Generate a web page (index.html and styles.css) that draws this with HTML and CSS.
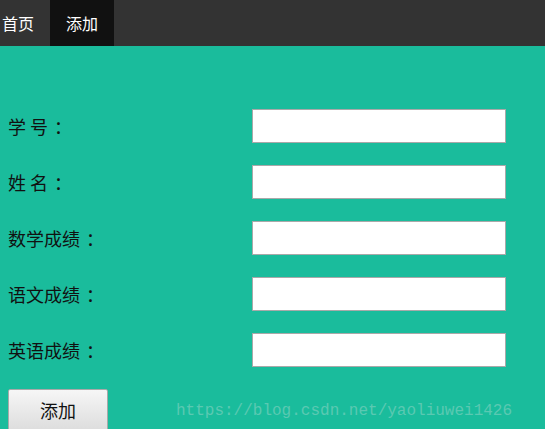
FILE: index.html
```html
<!DOCTYPE html>
<html lang="zh-CN">
<head>
  <meta charset="UTF-8" />
  <title>添加</title>
  <link rel="stylesheet" href="styles.css">
</head>
<body>

<ul class="nav">
  <li><a href="#" class="first">首页</a></li>
  <li><a href="#" class="active">添加</a></li>
</ul>

<form class="add-form">
  <div class="row">
    <label for="sno">学 号<span class="colon">：</span></label>
    <input type="text" id="sno" />
  </div>
  <div class="row">
    <label for="sname">姓 名<span class="colon">：</span></label>
    <input type="text" id="sname" />
  </div>
  <div class="row">
    <label for="math">数学成绩<span class="colon">：</span></label>
    <input type="text" id="math" />
  </div>
  <div class="row">
    <label for="chinese">语文成绩<span class="colon">：</span></label>
    <input type="text" id="chinese" />
  </div>
  <div class="row">
    <label for="english">英语成绩<span class="colon">：</span></label>
    <input type="text" id="english" />
  </div>
  <div class="btn-row">
    <button type="submit" class="add-btn">添加</button>
    <span class="mark">https://blog.csdn.net/yaoliuwei1426</span>
  </div>
</form>

</body>
</html>
```

FILE: styles.css
```css
body {
  margin: 0;
  background: #1abc9c;
  font-family: "Noto Sans CJK SC", "Noto Sans", sans-serif;
  overflow: hidden;
}

.nav {
  list-style: none;
  margin: 0;
  padding: 0;
  height: 46px;
  background: #333;
  display: flex;
}

.nav a {
  display: block;
  height: 46px;
  line-height: 46px;
  padding: 0 16px;
  color: #fff;
  font-size: 16px;
  text-decoration: none;
}

.nav a.first {
  padding-left: 2px;
}

.nav a.active {
  background: #111;
}

.add-form {
  padding: 63px 0 0 8px;
}

.row {
  display: flex;
  align-items: center;
  height: 34px;
  margin-bottom: 22px;
}

label {
  width: 244px;
  font-size: 18px;
  color: #111;
}

.colon {
  margin-left: 6px;
}

input {
  box-sizing: border-box;
  width: 254px;
  height: 34px;
  border: 1px solid #a9a9a9;
  background: #fff;
  padding: 0 6px;
}

.btn-row {
  display: flex;
  align-items: center;
}

.add-btn {
  box-sizing: border-box;
  width: 100px;
  height: 42px;
  border: 1px solid #a9a9a9;
  border-radius: 2px;
  background: linear-gradient(#f6f6f6, #dddddd);
  font-family: inherit;
  font-size: 18px;
  color: #111;
  cursor: pointer;
}

.mark {
  margin-left: 68px;
  margin-top: 2px;
  font-family: "Liberation Mono", monospace;
  font-size: 16px;
  color: #5ac9b2;
}
```
